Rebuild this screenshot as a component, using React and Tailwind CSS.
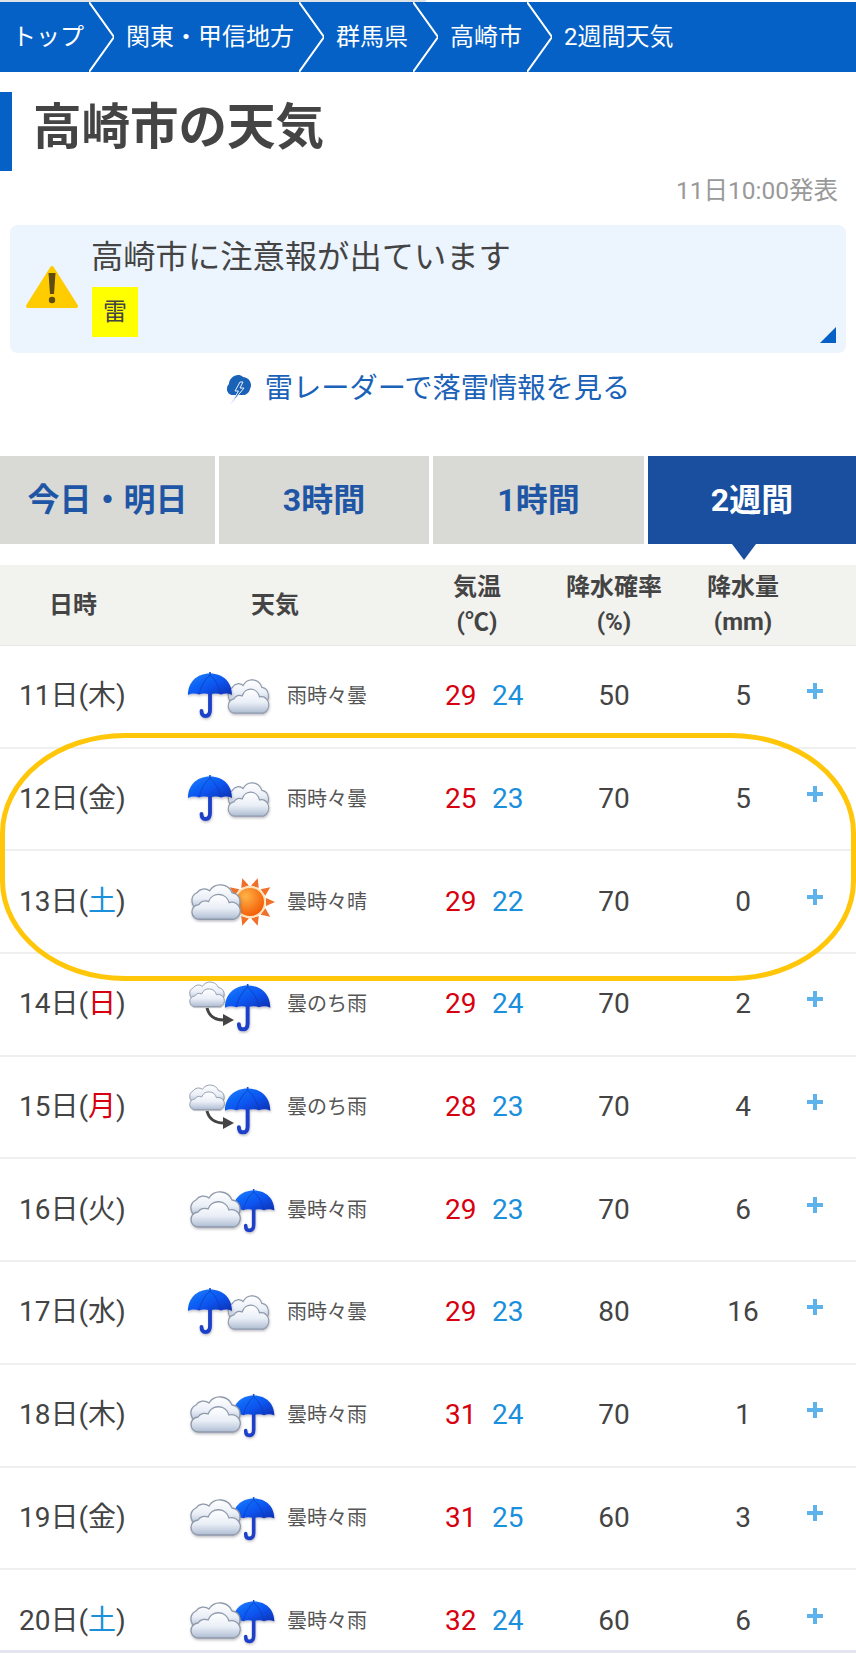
const crumbs = ["トップ", "関東・甲信地方", "群馬県", "高崎市"];

const tabs = [
  { label: "今日・明日", w: "w-[215px]" },
  { label: "3時間", w: "w-[210px]" },
  { label: "1時間", w: "w-[211px]" },
  { label: "2週間", w: "w-[208px]", active: true },
];

const days = [
  { d: "11", w: "木", kind: "rainCloud", text: "雨時々曇", hi: 29, lo: 24, pop: 50, mm: 5 },
  { d: "12", w: "金", kind: "rainCloud", text: "雨時々曇", hi: 25, lo: 23, pop: 70, mm: 5 },
  { d: "13", w: "土", wc: "text-[#1a8fdc]", kind: "cloudSun", text: "曇時々晴", hi: 29, lo: 22, pop: 70, mm: 0 },
  { d: "14", w: "日", wc: "text-[#d7000f]", kind: "cloudThenRain", text: "曇のち雨", hi: 29, lo: 24, pop: 70, mm: 2 },
  { d: "15", w: "月", wc: "text-[#d7000f]", kind: "cloudThenRain", text: "曇のち雨", hi: 28, lo: 23, pop: 70, mm: 4 },
  { d: "16", w: "火", kind: "cloudRain", text: "曇時々雨", hi: 29, lo: 23, pop: 70, mm: 6 },
  { d: "17", w: "水", kind: "rainCloud", text: "雨時々曇", hi: 29, lo: 23, pop: 80, mm: 16 },
  { d: "18", w: "木", kind: "cloudRain", text: "曇時々雨", hi: 31, lo: 24, pop: 70, mm: 1 },
  { d: "19", w: "金", kind: "cloudRain", text: "曇時々雨", hi: 31, lo: 25, pop: 60, mm: 3 },
  { d: "20", w: "土", wc: "text-[#1a8fdc]", kind: "cloudRain", text: "曇時々雨", hi: 32, lo: 24, pop: 60, mm: 6 },
];

const Defs = () => (
  <svg className="absolute w-0 h-0">
    <defs>
      <linearGradient id="canopy" x1="0" y1="0" x2="1" y2="1">
        <stop offset="0" stopColor="#1a80ff" />
        <stop offset="0.55" stopColor="#0a55f0" />
        <stop offset="1" stopColor="#0a2fb0" />
      </linearGradient>
      <linearGradient id="cloud" x1="0" y1="0" x2="0" y2="1">
        <stop offset="0" stopColor="#ffffff" />
        <stop offset="0.55" stopColor="#eaeff7" />
        <stop offset="1" stopColor="#aebcd2" />
      </linearGradient>
      <radialGradient id="sun" cx="0.35" cy="0.3" r="0.8">
        <stop offset="0" stopColor="#ffb347" />
        <stop offset="1" stopColor="#f25500" />
      </radialGradient>
      <filter id="soft" x="-20%" y="-20%" width="140%" height="140%">
        <feDropShadow dx="0.5" dy="1.5" stdDeviation="1" floodColor="#445" floodOpacity="0.35" />
      </filter>
    </defs>
  </svg>
);

// 44 wide, 44 high
const Umbrella = ({ x, y, s = 1 }) => (
  <g transform={`translate(${x} ${y}) scale(${s})`} filter="url(#soft)">
    <path d="M22 21V38Q22 44 17.5 44Q13.5 44 13.5 39" fill="none" stroke="#1a3fc8" strokeWidth="3.8" strokeLinecap="round" />
    <path d="M22 1.500C36 1.500 44 11 44 23Q39 20.500 33 22.500Q28 20.500 22 22.500Q16 20.500 11 22.500Q5 20.500 0 23C0 11 8 1.500 22 1.500Z" fill="url(#canopy)" />
    <path d="M22 0V3" stroke="#0a4fd8" strokeWidth="1.6" />
    <path d="M22 3Q14 10 11 22M22 3Q30 10 33 22" fill="none" stroke="#0a38b8" strokeWidth="0.7" />
  </g>
);

// 55 wide, 38 high
const Clouds = ({ x, y, s = 1, sy = s }) => (
  <g transform={`translate(${x} ${y}) scale(${s} ${sy})`} filter="url(#soft)" stroke="#8e99aa" strokeWidth="1.3" fill="url(#cloud)">
    <path d="M12 28A9 9 0 0 1 9 11A9 9 0 0 1 22 9A13 13 0 0 1 45 11A9 9 0 0 1 48 28Z" />
    <path d="M12 38A7.500 7.500 0 0 1 11 23A8 8 0 0 1 21 20A11 11 0 0 1 42 21A8.500 8.500 0 0 1 47 38Z" />
  </g>
);

const rays = [0, 36, 72, 108, 144, 180, 216, 252, 288, 324];

const Sun = ({ cx, cy }) => (
  <g transform={`translate(${cx} ${cy})`}>
    {rays.map((r) => (
      <polygon key={r} points="-4,-16 4,-16 0,-25" fill="#f0702a" transform={`rotate(${r + 18})`} />
    ))}
    <circle r="16" fill="#ffe3b8" />
    <circle r="14" fill="url(#sun)" />
  </g>
);

const WeatherIcon = ({ kind }) => (
  <svg viewBox="0 0 114 60" className="w-[114px] h-[60px]">
    {kind === "rainCloud" && (
      <>
        <Clouds x={55} y={11} s={0.82} sy={0.95} />
        <Umbrella x={18} y={6} />
      </>
    )}
    {kind === "cloudSun" && (
      <>
        <Sun cx={80} cy={30} />
        <Clouds x={18} y={10} s={0.98} />
      </>
    )}
    {kind === "cloudRain" && (
      <>
        <Umbrella x={63} y={9} s={0.94} />
        <Clouds x={17} y={9} />
      </>
    )}
    {kind === "cloudThenRain" && (
      <>
        <Clouds x={17} y={6} s={0.7} />
        <path d="M37 34Q40 46 54 46" fill="none" stroke="#444" strokeWidth="3" />
        <polygon points="53,40 64,46 53,52" fill="#444" />
        <Umbrella x={55} y={10} s={1.03} />
      </>
    )}
  </svg>
);

const Chevron = () => (
  <svg viewBox="0 0 25 70" className="w-[25px] h-[70px] shrink-0" fill="none">
    <path d="M0 0L25 35L0 70" stroke="#ffffff" strokeWidth="2" />
  </svg>
);

const PlusIcon = () => (
  <svg viewBox="0 0 16 16" className="w-4 h-4 -mt-2">
    <path d="M6 0H10V6H16V10H10V16H6V10H0V6H6Z" fill="#5db2ec" />
  </svg>
);

const WarningIcon = () => (
  <svg viewBox="0 0 52 44" className="w-[52px] h-[44px] shrink-0">
    <path d="M26 3L50 41H2Z" fill="#ffcc00" stroke="#ffcc00" strokeWidth="4" strokeLinejoin="round" />
    <path d="M22.500 8H29.500L28 29H24Z" fill="#5f4c10" />
    <circle cx="26" cy="35" r="3.200" fill="#5f4c10" />
  </svg>
);

const ThunderIcon = () => (
  <svg viewBox="0 0 25 30" className="w-[25px] h-[30px] shrink-0">
    <path d="M7 21C1 21 -1 14 3 10C3 3 12 -2 17 3C23 3 27 10 24 15C23 19 20 21 17 21Z" fill="#1a62b8" />
    <path d="M14 8L9 17H12.500L5 30L18 14H14L17 8Z" fill="#1a62b8" stroke="#eaf3fd" strokeWidth="1" />
  </svg>
);

const App = () => {
  return (
    <div className="relative w-full h-[1654px] overflow-hidden bg-white text-[#444] font-[Roboto,'Noto_Sans_CJK_JP',sans-serif]">
      <Defs />

      {/* Breadcrumb */}
      <div className="flex h-[2px]">
        <div className="w-[426px] bg-[#dfe3e6]" />
      </div>
      <nav className="flex items-center h-[70px] bg-[#0561c6] text-white text-[24px] pl-3">
        {crumbs.map((c) => (
          <div key={c} className="flex items-center">
            <span className="mr-[5px] whitespace-nowrap">{c}</span>
            <Chevron />
            <span className="w-3" />
          </div>
        ))}
        <span className="whitespace-nowrap">2週間天気</span>
      </nav>

      {/* Title */}
      <div className="mt-5 h-[79px] flex items-center border-l-[12px] border-[#0561c6] pl-[21px]">
        <h1 className="text-[48.500px] font-bold leading-none -mt-[6px]">高崎市の天気</h1>
      </div>
      <p className="mt-2 text-right text-[24.5px] leading-6 pr-[18px] text-[#999]">11日10:00発表</p>

      {/* Alert */}
      <div className="relative mx-[10px] mt-[22px] h-[128px] rounded-lg bg-[#ecf4fe] flex">
        <div className="w-[81px] pl-4 pt-10">
          <WarningIcon />
        </div>
        <div>
          <p className="text-[32.3px] leading-10 mt-3">高崎市に注意報が出ています</p>
          <div className="mt-[10px] ml-px w-[46px] h-[50px] bg-[#ffff00] flex items-center justify-center text-[24px]">雷</div>
        </div>
        <span className="absolute right-[10px] bottom-[10px] w-0 h-0 border-l-[16px] border-b-[16px] border-l-transparent border-b-[#0561c6]" />
      </div>

      {/* Link */}
      <a className="mt-4 flex items-center justify-center gap-[14px] text-[28.25px] leading-10 text-[#1a62b8]">
        <ThunderIcon />
        <span>雷レーダーで落雷情報を見る</span>
      </a>

      {/* Tabs */}
      <div className="relative mt-[47px] flex gap-1 h-[88px]">
        {tabs.map((t) => (
          <div
            key={t.label}
            className={`${t.w} flex items-center justify-center text-[32px] font-bold ${t.active ? "bg-[#1a4fa0] text-white" : "bg-[#d9d9d5] text-[#1f55a5]"}`}
          >
            {t.label}
          </div>
        ))}
        <span className="absolute left-[732px] top-[88px] w-0 h-0 border-x-[12px] border-t-[16px] border-x-transparent border-t-[#1a4fa0]" />
      </div>

      {/* Table header */}
      <div className="mt-[21px] h-[81px] bg-[#f2f2ee] border-b border-[#e8e8e6] grid grid-cols-[146px_258px_146px_128px_130px] items-center text-center text-[24px] leading-[35px] font-bold">
        <div>日時</div>
        <div>天気</div>
        <div>気温<br />(℃)</div>
        <div>降水確率<br />(%)</div>
        <div>降水量<br />(mm)</div>
      </div>

      {/* Rows */}
      {days.map((r) => (
        <div
          key={r.d}
          className="grid grid-cols-[170px_114px_161px_47px_32px_180px_78px_66px] items-center h-[102.7px] border-b-2 border-[#efefef]"
        >
          <div className="pl-[19px] text-[28px] whitespace-nowrap">
            {r.d}日(<span className={r.wc}>{r.w}</span>)
          </div>
          <WeatherIcon kind={r.kind} />
          <div className="pl-[3px] text-[20px] text-[#555]">{r.text}</div>
          <div className="text-[28px] text-[#d7000f]">{r.hi}</div>
          <div className="text-[28px] text-[#1a8fdc]">{r.lo}</div>
          <div className="text-[28px] text-center">{r.pop}</div>
          <div className="text-[28px] text-center">{r.mm}</div>
          <div className="flex justify-center -mt-[2px]">
            <PlusIcon />
          </div>
        </div>
      ))}

      {/* Bottom bar edge, over the cut off last row */}
      <div className="absolute left-0 right-0 top-[1650px] h-[3px] bg-[#e4e4f0]" />
      <div className="absolute left-0 right-0 top-[1653px] h-px bg-white" />

      {/* Hand drawn highlight */}
      <div className="absolute left-0 right-0 top-[733px] h-[248px] border-[5px] border-[#ffc60a] rounded-[125px/100px]" />
    </div>
  );
};

export default App;
